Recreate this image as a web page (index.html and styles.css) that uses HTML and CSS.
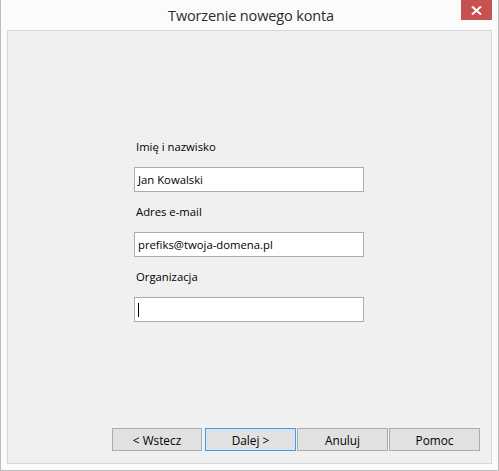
FILE: index.html
```html
<!DOCTYPE html>
<html lang="pl">
<head>
<meta charset="utf-8">
<title>Tworzenie nowego konta</title>
<link rel="stylesheet" href="styles.css">
</head>
<body>
<div class="window">
  <div class="titlebar">
    <div class="title">Tworzenie nowego konta</div>
    <div class="close">
      <svg width="11" height="9" viewBox="0 0 11 9"><path d="M1 0.5 L10 8.5 M10 0.5 L1 8.5" stroke="#fff" stroke-width="2"/></svg>
    </div>
  </div>
  <div class="panel">
    <div class="form">
      <div class="field">
        <div class="label">Imię i nazwisko</div>
        <div class="input">Jan Kowalski</div>
      </div>
      <div class="field">
        <div class="label">Adres e-mail</div>
        <div class="input">prefiks@twoja-domena.pl</div>
      </div>
      <div class="field">
        <div class="label">Organizacja</div>
        <div class="input"><span class="caret"></span></div>
      </div>
    </div>
    <div class="buttons">
      <div class="btn first">&lt; Wstecz</div>
      <div class="btn default">Dalej &gt;</div>
      <div class="btn">Anuluj</div>
      <div class="btn">Pomoc</div>
    </div>
  </div>
</div>
</body>
</html>
```

FILE: styles.css
```css
html, body {
  margin: 0;
  padding: 0;
  background: #fbfbfb;
}
.window {
  width: 499px;
  height: 471px;
  box-sizing: border-box;
  border: 1px solid #bdbdbd;
  border-top: none;
  background: #fbfbfb;
  display: flex;
  flex-direction: column;
  font-family: "Open Sans", "Noto Sans", sans-serif;
}
.titlebar {
  height: 30px;
  position: relative;
  display: flex;
  justify-content: center;
  align-items: center;
}
.title {
  font-size: 14.5px;
  color: #2b2b2b;
  margin-top: 1px;
  margin-left: 3px;
  letter-spacing: -0.15px;
}
.close {
  position: absolute;
  right: 6px;
  top: 0;
  width: 31px;
  height: 20px;
  background: #c75050;
  display: flex;
  align-items: center;
  justify-content: center;
}
.panel {
  flex: 1;
  margin: 0 6px 6px 6px;
  border: 1px solid #d6d6d6;
  background: #f0f0f0;
  display: flex;
  flex-direction: column;
}
.form {
  padding-top: 108px;
  padding-left: 126px;
  display: flex;
  flex-direction: column;
  gap: 12px;
}
.field {
  display: flex;
  flex-direction: column;
}
.label {
  font-size: 11.3px;
  line-height: 16px;
  height: 16px;
  color: #000;
  padding-left: 2px;
  margin-bottom: 12px;
}
.input {
  width: 230px;
  height: 25px;
  box-sizing: border-box;
  border: 1px solid #abadb3;
  background: #fff;
  font-size: 11.3px;
  line-height: 23px;
  padding-left: 3px;
  color: #000;
  display: flex;
  align-items: center;
}
.caret {
  width: 1px;
  height: 14px;
  background: #000;
}
.buttons {
  margin-top: auto;
  display: flex;
  justify-content: flex-end;
  gap: 1px;
  padding: 0 11px 12px 0;
}
.btn {
  width: 91px;
  height: 23px;
  box-sizing: border-box;
  border: 1px solid #adadad;
  background: #e1e1e1;
  font-size: 11.8px;
  color: #000;
  display: flex;
  align-items: center;
  justify-content: center;
}
.btn.first {
  width: 90px;
  margin-right: 2px;
}
.btn.default {
  border-color: #3c9bff;
}
```
